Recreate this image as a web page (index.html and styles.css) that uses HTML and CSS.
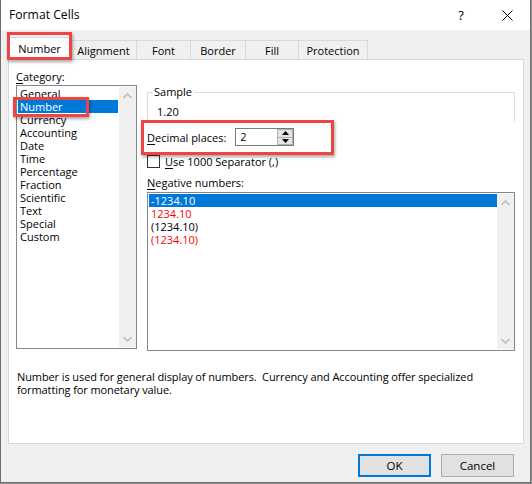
FILE: index.html
```html
<!DOCTYPE html>
<html>
<head>
<meta charset="utf-8">
<link rel="stylesheet" href="styles.css">
</head>
<body>
<div class="dialog">
  <div class="titlebar">
    <span class="title">Format Cells</span>
    <span class="capbtn help">?</span>
    <span class="capbtn"><svg width="11" height="11" viewBox="0 0 11 11"><path d="M0.5 0.5 L10.5 10.5 M10.5 0.5 L0.5 10.5" stroke="#000" stroke-width="1" fill="none"/></svg></span>
  </div>
  <div class="tabs">
    <div class="tab selected t-number">Number</div>
    <div class="tab t-align">Alignment</div>
    <div class="tab t-font">Font</div>
    <div class="tab t-border">Border</div>
    <div class="tab t-fill">Fill</div>
    <div class="tab t-prot">Protection</div>
  </div>
  <div class="panel">
    <div class="cols">
      <div class="leftcol">
        <div class="label cat-label"><u>C</u>ategory:</div>
        <div class="listbox catlist">
          <div class="items">
            <div class="item">General</div>
            <div class="item sel">Number</div>
            <div class="item">Currency</div>
            <div class="item">Accounting</div>
            <div class="item">Date</div>
            <div class="item">Time</div>
            <div class="item">Percentage</div>
            <div class="item">Fraction</div>
            <div class="item">Scientific</div>
            <div class="item">Text</div>
            <div class="item">Special</div>
            <div class="item">Custom</div>
          </div>
          <div class="scroll">
            <svg width="9" height="6" viewBox="0 0 9 6"><path d="M0.5 5 L4.5 1 L8.5 5" stroke="#bfbfbf" stroke-width="1.6" fill="none"/></svg>
            <svg width="9" height="6" viewBox="0 0 9 6"><path d="M0.5 1 L4.5 5 L8.5 1" stroke="#bfbfbf" stroke-width="1.6" fill="none"/></svg>
          </div>
        </div>
      </div>
      <div class="rightcol">
        <div class="group">
          <span class="legend">Sample</span>
          <div class="sample">1.20</div>
        </div>
        <div class="decrow">
          <span class="label"><u>D</u>ecimal places:</span>
          <div class="spin">
            <span class="spinval">2</span>
            <div class="spinbtns">
              <div class="sbtn"><svg width="7" height="4" viewBox="0 0 7 4"><path d="M0 4 L3.5 0 L7 4 Z" fill="#000"/></svg></div>
              <div class="sbtn"><svg width="7" height="4" viewBox="0 0 7 4"><path d="M0 0 L3.5 4 L7 0 Z" fill="#000"/></svg></div>
            </div>
          </div>
        </div>
        <div class="checkrow">
          <span class="checkbox"></span>
          <span class="label"><u>U</u>se 1000 Separator (,)</span>
        </div>
        <div class="label neg-label"><u>N</u>egative numbers:</div>
        <div class="listbox neglist">
          <div class="items">
            <div class="item sel">-1234.10</div>
            <div class="item red">1234.10</div>
            <div class="item">(1234.10)</div>
            <div class="item red">(1234.10)</div>
          </div>
          <div class="scroll">
            <svg width="9" height="6" viewBox="0 0 9 6"><path d="M0.5 5 L4.5 1 L8.5 5" stroke="#bfbfbf" stroke-width="1.6" fill="none"/></svg>
            <svg width="9" height="6" viewBox="0 0 9 6"><path d="M0.5 1 L4.5 5 L8.5 1" stroke="#bfbfbf" stroke-width="1.6" fill="none"/></svg>
          </div>
        </div>
      </div>
    </div>
    <p class="desc">Number is used for general display of numbers.&nbsp; Currency and Accounting offer specialized formatting for monetary value.</p>
  </div>
  <div class="buttons">
    <div class="btn ok">OK</div>
    <div class="btn">Cancel</div>
  </div>
  <div class="mark mark-tab"></div>
  <div class="mark mark-item"></div>
  <div class="mark mark-dec"></div>
</div>
</body>
</html>
```
FILE: styles.css
```css
html, body {
  margin: 0;
  padding: 0;
  background: #8c8c8c;
}
body {
  font-family: "Open Sans", "Noto Sans", sans-serif;
  font-size: 11px;
  color: #000;
}
.dialog {
  position: relative;
  box-sizing: border-box;
  width: 531px;
  height: 483px;
  background: #f0f0f0;
  border-left: 1px solid #6e6e6e;
  border-right: 1px solid #6e6e6e;
  border-bottom: 1px solid #6e6e6e;
  overflow: hidden;
}
.titlebar {
  height: 30px;
  background: #fff;
  display: flex;
  align-items: center;
  padding-left: 8px;
}
.title {
  font-size: 12.2px;
  flex: 1;
  margin-top: -1px;
}
.capbtn {
  width: 46px;
  height: 30px;
  display: flex;
  align-items: center;
  justify-content: center;
}
.help {
  font-size: 13px;
}
.tabs {
  display: flex;
  align-items: flex-end;
  height: 29px;
  padding-left: 7px;
  position: relative;
  z-index: 2;
}
.tab {
  box-sizing: border-box;
  height: 19px;
  border: 1px solid #d9d9d9;
  border-bottom: none;
  border-left: none;
  background: #f0f0f0;
  display: flex;
  align-items: center;
  justify-content: center;
  line-height: 1;
}
.tab.selected {
  height: 23px;
  background: #fff;
  border-left: 1px solid #d9d9d9;
  margin-bottom: -1px;
  padding-bottom: 2px;
}
.t-number { width: 63px; }
.t-align { width: 66px; }
.t-font { width: 54px; }
.t-border { width: 55px; }
.t-fill { width: 53px; }
.t-prot { width: 69px; }
.panel {
  box-sizing: border-box;
  margin-left: 7px;
  width: 516px;
  height: 385px;
  background: #fff;
  border: 1px solid #d9d9d9;
  padding: 9px 7px 0 7px;
}
.cols {
  display: flex;
  gap: 10px;
}
.leftcol {
  width: 121px;
}
.label u {
  text-decoration-thickness: 1px;
  text-underline-offset: 2px;
}
.cat-label {
  height: 16px;
  line-height: 16px;
}
.listbox {
  box-sizing: border-box;
  border: 1px solid #828790;
  display: flex;
  background: #fff;
}
.catlist {
  height: 264px;
}
.items {
  flex: 1;
  padding: 1px 1px;
}
.item {
  height: 13px;
  line-height: 13px;
  padding-left: 2px;
  white-space: nowrap;
}
.item.sel {
  background: #0078d7;
  color: #fff;
}
.item.red {
  color: #ff0000;
}
.scroll {
  width: 17px;
  background: #f0f0f0;
  display: flex;
  flex-direction: column;
  justify-content: space-between;
  align-items: center;
  padding: 6px 0 5px;
  box-sizing: border-box;
  margin: 1px 0;
}
.rightcol {
  width: 368px;
  padding-top: 23px;
}
.group {
  position: relative;
  box-sizing: border-box;
  height: 30px;
  border: 1px solid #dcdcdc;
  border-bottom: none;
}
.legend {
  position: absolute;
  top: -9px;
  left: 4px;
  background: #fff;
  padding: 0 2px;
  line-height: 16px;
}
.sample {
  padding: 12px 0 0 9px;
  line-height: 14px;
}
.decrow {
  display: flex;
  align-items: center;
  margin-top: 6px;
  height: 18px;
  gap: 9px;
}
.spin {
  box-sizing: border-box;
  width: 59px;
  height: 18px;
  border: 1px solid #7a7a7a;
  display: flex;
  align-items: center;
}
.spinval {
  flex: 1;
  padding-left: 4px;
  line-height: 14px;
}
.spinbtns {
  display: flex;
  flex-direction: column;
  height: 16px;
  width: 16px;
}
.sbtn {
  box-sizing: border-box;
  flex: 1;
  background: #e5e5e5;
  border: 1px solid #b0b0b0;
  display: flex;
  align-items: center;
  justify-content: center;
}
.sbtn + .sbtn {
  border-top: none;
}
.checkrow {
  display: flex;
  align-items: center;
  margin-top: 9px;
  height: 13px;
  gap: 5px;
}
.checkbox {
  box-sizing: border-box;
  width: 13px;
  height: 13px;
  border: 1px solid #333;
  background: #fff;
}
.neg-label {
  margin-top: 7px;
  height: 16px;
  line-height: 16px;
}
.neglist {
  height: 159px;
  margin-top: 1px;
}
.neglist .items {
  padding: 1px 0 1px 1px;
}
.desc {
  margin: 19px 0 0 1px;
  line-height: 13px;
  width: 480px;
  letter-spacing: -0.1px;
}
.buttons {
  display: flex;
  justify-content: flex-end;
  gap: 10px;
  padding: 10px 16px 0 0;
}
.btn {
  box-sizing: border-box;
  width: 73px;
  height: 23px;
  background: #e1e1e1;
  border: 1px solid #adadad;
  display: flex;
  align-items: center;
  justify-content: center;
  font-size: 11.5px;
}
.btn.ok {
  border: 2px solid #0078d7;
}
.mark {
  position: absolute;
  border: 3px solid #ef4444;
  box-shadow: 1px 2px 3px rgba(0,0,0,0.35);
  z-index: 5;
}
.mark-tab {
  left: 6px;
  top: 32px;
  width: 59px;
  height: 22px;
}
.mark-item {
  left: 12px;
  top: 97px;
  width: 70px;
  height: 14px;
}
.mark-dec {
  left: 140px;
  top: 120px;
  width: 187px;
  height: 29px;
}
```
